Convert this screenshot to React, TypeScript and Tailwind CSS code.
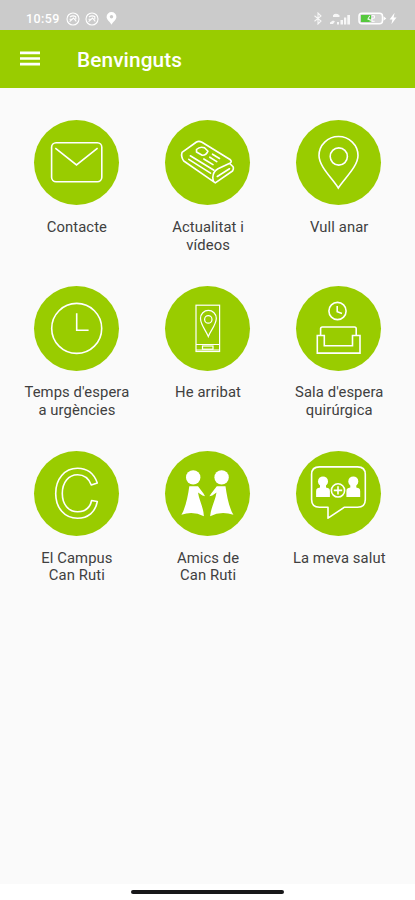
import React from "react";

function Envelope() {
  return (
    <>
      <rect x="17.6" y="22.7" width="50.2" height="39" rx="4.5" />
      <path d="M21.3 28.2 42.5 45 63.6 28.2" />
    </>
  );
}

function Newspaper() {
  return (
    <g strokeLinejoin="round" strokeLinecap="round">
      <path d="M50.3 62.8 18.8 41Q15.7 36.5 17 32.4L31.5 22Q34 20.6 37 22.3L65 39.5Q67.3 41.3 65.3 43L53 48.8Q48 51.5 47.8 57.5 48 62 50.3 62.8L67.5 51Q69.6 47.5 67 45.6L64.6 43.5" />
      <path d="M52.3 56.5 64.5 48.8" />
      <path d="M31.5 29.5Q35 26 39.5 27.8L43 31.2Q41 35.6 37.2 35.3L31.5 32Z" />
      <path d="M47.5 34.2 54.5 38.5M44.8 37.2 51.8 41.6M25.3 35.8 49 50.2M23.8 39.3 45.5 53.2M38.8 39 48 44.6" />
    </g>
  );
}

function Pin() {
  return (
    <>
      <path d="M42.3 68C36.5 58.5 23 46.5 23 35.5a19.5 19 0 0 1 39 0C62 46.5 48.3 58.5 42.3 68Z" />
      <circle cx="42.8" cy="36.5" r="8.6" />
    </>
  );
}

function Clock() {
  return (
    <>
      <circle cx="42.7" cy="42.4" r="25" />
      <path d="M42.7 27.3V44.2H54.6" />
    </>
  );
}

function Phone() {
  return (
    <g strokeWidth="1.2">
      <rect x="31" y="19.2" width="23.6" height="46.3" />
      <path d="M31 58.5H54.6M31 64H54.6" />
      <rect x="37.5" y="60" width="10.5" height="3.2" />
      <path d="M43.3 50.5C41 44.5 35.5 39 35.5 32.3a7.9 7.9 0 0 1 15.8 0C51.3 39 45.5 44.5 43.3 50.5Z" />
      <circle cx="43.3" cy="33.4" r="3.7" />
    </g>
  );
}

function Sofa() {
  return (
    <>
      <circle cx="41.5" cy="25" r="8.6" />
      <path d="M41.2 20V25.7L46 27.4" />
      <path d="M24.6 49.2V42.8Q24.6 41 26.4 41H58.5Q60.2 41 60.2 42.8V49.2" />
      <path d="M21.3 49.5H28.3V59.8H56.5V49.5H64V67.1H21.3Z" />
    </>
  );
}

function Campus() {
  return (
    <path
      strokeLinejoin="round"
      d="M63.3 32C60 22.5 53 17.3 43.5 17.3 30.5 17.3 21.7 28 21.7 42.4S30.5 67.2 43.5 67.2C54 67.2 61.5 61 63.3 50.5L57.6 49.5C56 57 51 60.8 43.5 60.8 34.5 60.8 28.3 53.3 28.3 42.4S34.5 23.8 43.5 23.8C50 23.8 54.8 27.5 57.3 34Z"
    />
  );
}

function Friends() {
  return (
    <g fill="white" stroke="none">
      <circle cx="28.2" cy="26.4" r="7.2" />
      <path d="M24.3 35.2H33L38.5 42.5 40 45.2 37.5 44.4 33 41.5C34 49 38.5 56 38.9 65.3Q28 59.5 16.4 63.8C20.5 57 23 45 24.3 35.2Z" />
      <circle cx="56.6" cy="26.4" r="7.2" />
      <path d="M60.5 35.2H51.8L46.2 42.5 44.4 45.2 47.3 44.4 51.5 41.5C50.5 49 46 56 45.1 65.3Q56 59.5 68.4 63.8C64.2 57 61.8 45 60.5 35.2Z" />
    </g>
  );
}

function Bust({ x }: { x: number }) {
  return (
    <g transform={`translate(${x} 0)`} fill="white" stroke="none">
      <circle cx="0" cy="30.4" r="5" />
      <path d="M-3 33H3V36.5L5.5 37.3Q6.9 38 6.9 40V46H-6.9V40Q-6.9 38 -5.5 37.3L-3 36.5Z" />
    </g>
  );
}

function Health() {
  return (
    <>
      <path
        strokeLinejoin="round"
        d="M23.5 15.9H61.5Q69.3 15.9 69.3 23.5V48.5Q69.3 56.2 61.5 56.2H48.5L32 67.2V56.2H23.5Q15.6 56.2 15.6 48.5V23.5Q15.6 15.9 23.5 15.9Z"
      />
      <Bust x={27} />
      <Bust x={57.3} />
      <circle cx="42" cy="39.4" r="6.6" />
      <path d="M42 35.2V43.6M37.8 39.4H46.2" />
    </>
  );
}

const tiles = [
  { label: ["Contacte"], Icon: Envelope },
  { label: ["Actualitat i", "vídeos"], Icon: Newspaper },
  { label: ["Vull anar"], Icon: Pin },
  { label: ["Temps d'espera", "a urgències"], Icon: Clock },
  { label: ["He arribat"], Icon: Phone },
  { label: ["Sala d'espera", "quirúrgica"], Icon: Sofa },
  { label: ["El Campus", "Can Ruti"], Icon: Campus },
  { label: ["Amics de", "Can Ruti"], Icon: Friends },
  { label: ["La meva salut"], Icon: Health },
];

function NoticeIcon() {
  return (
    <svg className="h-[14px] w-[14px]" viewBox="0 0 14 14" fill="none" stroke="white" strokeWidth="1.1">
      <circle cx="7" cy="7" r="6" />
      <path d="M4 5Q7 2.8 9.8 4.8V7.2M3.6 9.6 7.5 6 10.3 9.3M3.5 7.2H6" />
    </svg>
  );
}

function StatusBar() {
  return (
    <div className="flex h-[29.5px] items-center bg-[#cbcbcb] pt-2 pr-[18px] pl-[26px] text-white">
      <span className="w-[40px] text-[12.5px] leading-none font-medium tracking-[0.4px]">10:59</span>
      <NoticeIcon />
      <span className="w-[5px]" />
      <NoticeIcon />
      <svg className="ml-[7px] h-[13px] w-[11px]" viewBox="0 0 11 13">
        <path d="M5.5 12.8C4.2 9.8.6 8 .6 5a4.9 4.9 0 0 1 9.8 0c0 3-3.6 4.8-4.9 7.8Z" fill="white" />
        <circle cx="5.5" cy="4.8" r="1.7" fill="#cbcbcb" />
      </svg>
      <div className="ml-auto flex items-center">
        <svg className="h-[13px] w-[10px] opacity-85" viewBox="0 0 10 13" fill="none" stroke="white" strokeWidth="1.1">
          <path d="M1.5 3.8 8 9 5 12V1L8 4 1.5 9.2" />
        </svg>
        <svg className="ml-[7px] h-[12px] w-[21px] opacity-85" viewBox="0 0 21 12" fill="white">
          <path d="M3 2.3Q5.5-.5 9.5 2.2V4H3ZM0 9.5 3 7.5 5 8.5 3 11H0ZM7 9H9V11.5H7ZM10.5 7H13V11.5H10.5ZM14 4.5H16.3V11.5H14ZM17.3 2H20V11.5H17.3Z" />
        </svg>
        <svg className="ml-[7px] h-[13px] w-[29px]" viewBox="0 0 29 13">
          <rect x="1" y="1.2" width="23.5" height="10.6" rx="3" fill="#d5d5d5" stroke="white" strokeWidth="1.5" />
          <path d="M25.5 4.2 28.3 6.5 25.5 8.8Z" fill="white" />
          <path d="M3 3H13V10H3Z" fill="#56c83d" />
          <path d="M11.8 3.7 9.8 7.3H12.2V9.5M14 3.7H16.4V6.2H14V9.3H16.6" fill="none" stroke="white" strokeWidth="1" />
        </svg>
        <svg className="ml-[2px] h-[13px] w-[8px]" viewBox="0 0 8 13">
          <path d="M5.6.8.6 7.4H3.4L2.4 12.2 7.5 5.5H4.6Z" fill="white" />
        </svg>
      </div>
    </div>
  );
}

export default function App() {
  return (
    <div className="flex h-[900px] w-[415px] flex-col overflow-hidden bg-[#fafafa] font-['Roboto',sans-serif]">
      <StatusBar />
      <header className="flex h-[58.7px] items-center bg-[#99cc00] pl-5 text-white">
        <svg className="h-[15px] w-5" viewBox="0 0 20 15" fill="none" stroke="white" strokeWidth="2.6">
          <path d="M0 1.9H20M0 7.5H20M0 13.1H20" />
        </svg>
        <h1 className="mt-[2px] ml-[37px] text-[20.8px] leading-6 font-medium tracking-[0.1px]">Benvinguts</h1>
      </header>
      <main className="grid flex-1 auto-rows-[165.4px] grid-cols-[repeat(3,131.2px)] content-start justify-start pt-[32px] pl-[11px]">
        {tiles.map(({ label, Icon }) => (
          <div key={label.join(" ")} className="flex flex-col items-center">
            <svg className="h-[85px] w-[85px] rounded-full bg-[#99cc00]" viewBox="0 0 85 85" fill="none" stroke="white" strokeWidth="1.6">
              <Icon />
            </svg>
            <p className="mt-[13.8px] pl-[0.6px] text-center text-[14.8px] leading-[17.7px] tracking-[0.1px] whitespace-nowrap text-[#404040]">
              {label.map((line) => (
                <span key={line} className="block">{line}</span>
              ))}
            </p>
          </div>
        ))}
      </main>
      <footer className="flex h-4 justify-center bg-white pt-[6px]">
        <div className="h-1 w-[153px] rounded-full bg-[#171719]" />
      </footer>
    </div>
  );
}
